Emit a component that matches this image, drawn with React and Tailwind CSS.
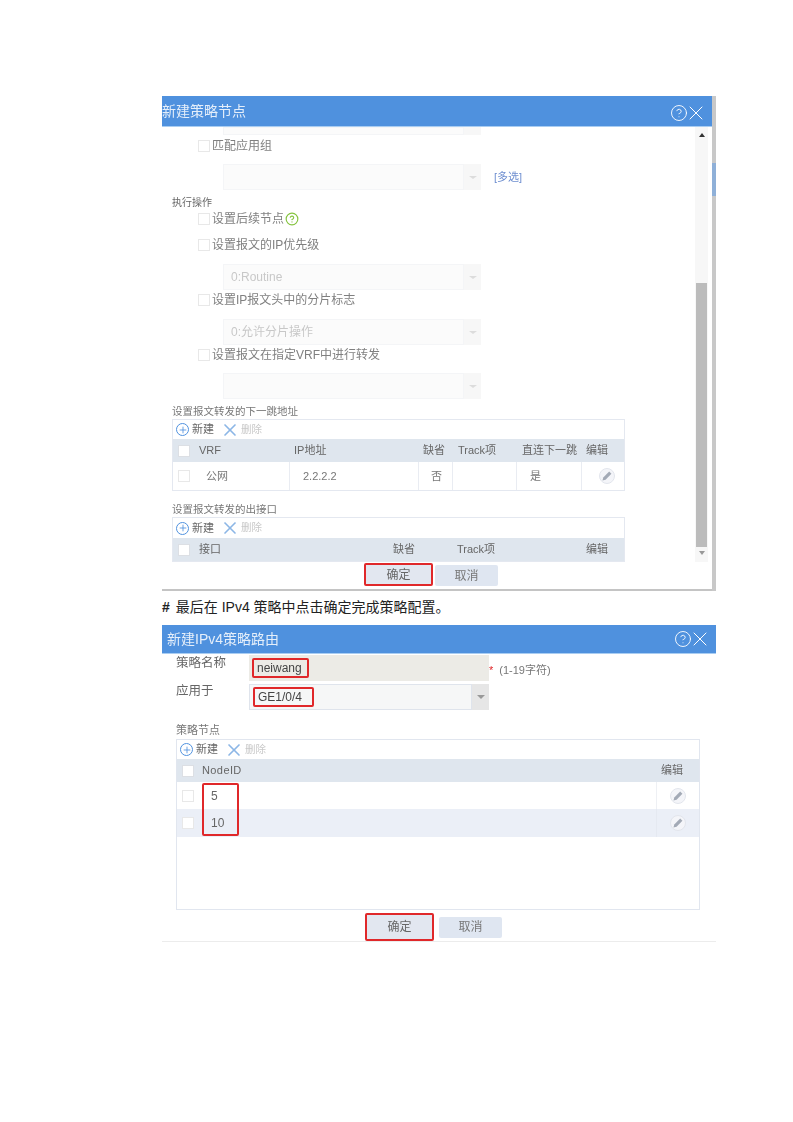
import { CircleHelp, X, Plus } from 'lucide-react'

const Box = ({ dim }) => (
  <span className={`block w-[12px] h-[12px] shrink-0 border ${dim ? 'border-[#e8e8e8] bg-white' : 'border-[#dcdfe4] bg-white'}`} />
)

const CheckRow = ({ children, className = '' }) => (
  <div className={`h-[20px] pl-[36px] flex items-center gap-[2px] text-[12px] text-[#808080] ${className}`}>
    <Box dim />
    <span className="flex items-center">{children}</span>
  </div>
)

const FadedSelect = ({ value, noArrow, className = '' }) => (
  <div className={`ml-[61px] w-[258px] flex ${className}`}>
    <div className="flex-1 bg-[#fbfbfb] border border-[#f4f5f7] pl-[7px] flex items-center text-[12px] text-[#c8c8c8]">{value}</div>
    <div className="w-[17px] bg-[#f7f7f7] flex items-center justify-center">
      {!noArrow && <span className="w-0 h-0 border-x-[4px] border-x-transparent border-t-[3px] border-t-[#dcdcdc]" />}
    </div>
  </div>
)

const Toolbar = ({ h }) => (
  <div className={`flex items-center pl-[3px] text-[11px] text-[#666] ${h}`}>
    <span className="w-[13px] h-[13px] rounded-full border-[1.5px] border-[#4f91de] flex items-center justify-center">
      <Plus size={10} strokeWidth={2} className="text-[#4f91de]" />
    </span>
    <span className="ml-[3px]">新建</span>
    <X size={20} strokeWidth={2} className="ml-[6px] text-[#8cb6e6]" />
    <span className="ml-[1px] text-[10.5px] text-[#c8c8c8]">删除</span>
  </div>
)

const PencilBtn = () => (
  <span className="w-[16px] h-[16px] rounded-full border border-[#e2e5ec] bg-[#f4f5f9] flex items-center justify-center">
    <svg width="12" height="12" viewBox="0 0 10 10">
      <path d="M1.2 8.8 L1.9 6.2 L6.8 1.3 L8.7 3.2 L3.8 8.1 Z" fill="#a3aab6" />
    </svg>
  </span>
)

const Title = ({ children, barClass, iconClass = '' }) => (
  <div className={`bg-[#4f91de] flex items-center justify-between text-white text-[14px] border-b border-[#a9cdf2] ${barClass}`}>
    <span className="opacity-85">{children}</span>
    <span className={`flex items-center ${iconClass}`}>
      <CircleHelp size={18} strokeWidth={1.2} className="-mr-[4px]" />
      <X size={24} strokeWidth={1} />
    </span>
  </div>
)

const Buttons = ({ className, gap, okH, cancelH, align }) => (
  <div className={`flex ${align} ${gap} ${className}`}>
    <div className={`w-[69px] ${okH} border-2 border-[#e0282a] rounded-[2px] bg-[#e2e7f0] flex items-center justify-center text-[12px] text-[#666]`}>确定</div>
    <div className={`w-[63px] ${cancelH} rounded-[2px] bg-[#dfe6f1] flex items-center justify-center text-[12px] text-[#777]`}>取消</div>
  </div>
)

const RedBox = ({ children, w }) => (
  <div className={`ml-[3px] h-[20px] ${w} border-2 border-[#e0282a] rounded-[2px] pl-[3px] flex items-center text-[12px] text-[#444]`}>{children}</div>
)

export default function App() {
  return (
    <div className="min-h-[1122px] bg-white pt-[96px] pl-[162px] font-['Liberation_Sans','Noto_Sans_CJK_SC',sans-serif]">
      {/* first dialog */}
      <div className="w-[554px] h-[495px] flex blur-[0.7px]">
        <div className="w-[550px] flex flex-col">
          <Title barClass="h-[31px] pr-[4px]" iconClass="pt-[3px]">新建策略节点</Title>
          <div className="flex-1 flex border-b-[2px] border-[#c4c4c4]">
            <div className="w-[533px] flex flex-col">
              <FadedSelect noArrow className="h-[8px]" />
              <CheckRow className="mt-[1px]">匹配应用组</CheckRow>
              <div className="flex items-center mt-[8px]">
                <FadedSelect className="h-[26px]" />
                <span className="ml-[13px] text-[11px] text-[#6f8fd0]">[多选]</span>
              </div>
              <div className="mt-[6px] h-[13px] pl-[10px] flex items-center text-[10px] text-[#666]">执行操作</div>
              <CheckRow>
                设置后续节点
                <CircleHelp size={14} strokeWidth={2} className="ml-[1px] text-[#86c440]" />
              </CheckRow>
              <CheckRow className="mt-[6px]">设置报文的IP优先级</CheckRow>
              <FadedSelect value="0:Routine" className="h-[26px] mt-[9px]" />
              <CheckRow>设置IP报文头中的分片标志</CheckRow>
              <FadedSelect value="0:允许分片操作" className="h-[26px] mt-[9px]" />
              <CheckRow>设置报文在指定VRF中进行转发</CheckRow>
              <FadedSelect className="h-[26px] mt-[8px]" />
              <div className="mt-[6px] h-[14px] pl-[10px] flex items-center text-[10.5px] text-[#777]">设置报文转发的下一跳地址</div>

              <div className="ml-[10px] w-[453px] border border-[#e4e8f0]">
                <Toolbar h="h-[19px]" />
                <div className="h-[23px] bg-[#dfe6ee] grid grid-cols-[117px_129px_34px_64px_65px_1fr] items-center text-[11px] text-[#666]">
                  <div className="flex items-center pl-[5px] gap-[9px]"><Box />VRF</div>
                  <div className="pl-[4px]">IP地址</div>
                  <div className="pl-[4px]">缺省</div>
                  <div className="pl-[5px]">Track项</div>
                  <div className="pl-[5px]">直连下一跳</div>
                  <div className="pl-[4px]">编辑</div>
                </div>
                <div className="h-[28px] grid grid-cols-[117px_129px_34px_64px_65px_1fr] items-stretch text-[11px] text-[#777] divide-x divide-[#e9ecf2]">
                  <div className="flex items-center pl-[5px] gap-[16px]"><Box dim />公网</div>
                  <div className="pl-[13px] flex items-center">2.2.2.2</div>
                  <div className="pl-[12px] flex items-center">否</div>
                  <div />
                  <div className="pl-[13px] flex items-center">是</div>
                  <div className="pl-[17px] flex items-center"><PencilBtn /></div>
                </div>
              </div>

              <div className="mt-[11px] h-[15px] pl-[10px] flex items-center text-[10.5px] text-[#777]">设置报文转发的出接口</div>
              <div className="ml-[10px] w-[453px] border border-[#e4e8f0]">
                <Toolbar h="h-[20px]" />
                <div className="h-[23px] bg-[#dfe6ee] grid grid-cols-[216px_64px_129px_1fr] items-center text-[11px] text-[#666]">
                  <div className="flex items-center pl-[5px] gap-[9px]"><Box />接口</div>
                  <div className="pl-[4px]">缺省</div>
                  <div className="pl-[4px]">Track项</div>
                  <div className="pl-[4px]">编辑</div>
                </div>
              </div>
              <Buttons className="mt-[1px] ml-[202px]" gap="gap-[2px]" okH="h-[23px]" cancelH="h-[21px]" align="items-end" />
            </div>

            {/* scrollbar */}
            <div className="w-[13px] h-[435px] bg-[#f7f7f7] flex flex-col items-center">
              <span className="mt-[6px] w-0 h-0 border-x-[3px] border-x-transparent border-b-[4px] border-b-[#333]" />
              <div className="h-[146px]" />
              <div className="w-[11px] h-[264px] bg-[#bcbcbc]" />
              <span className="mt-[4px] w-0 h-0 border-x-[3px] border-x-transparent border-t-[4px] border-t-[#999]" />
            </div>
          </div>
        </div>
        <div className="w-[4px] flex flex-col bg-[#c8c8c8]">
          <div className="h-[67px]" />
          <div className="h-[33px] bg-[#8fb0d8]" />
        </div>
      </div>

      <p className="mt-[6px] h-[20px] flex items-center text-[14px] text-[#222]">
        <span className="font-bold">#</span>
        <span className="ml-[6px]">最后在 IPv4 策略中点击确定完成策略配置。</span>
      </p>

      {/* second dialog */}
      <div className="mt-[8px] w-[554px] blur-[0.7px] border-b border-[#ececec]">
        <Title barClass="h-[29px] pl-[5px] pr-[4px]">新建IPv4策略路由</Title>
        <div className="pl-[14px] pt-[1px]">
          <div className="flex items-start">
            <span className="w-[73px] text-[12.5px] text-[#666] leading-[16px]">策略名称</span>
            <div className="w-[240px] h-[26px] bg-[#ecebe6] flex items-center"><RedBox w="w-[57px]">neiwang</RedBox></div>
            <span className="mt-[9px] text-[11px] leading-[12px] text-[#e0282a]">*</span>
            <span className="mt-[7px] ml-[6px] text-[11px] text-[#777]">(1-19字符)</span>
          </div>
          <div className="flex items-start mt-[3px]">
            <span className="w-[73px] text-[12.5px] text-[#666] leading-[14px]">应用于</span>
            <div className="w-[240px] h-[26px] flex">
              <div className="flex-1 bg-[#f6f7f7] border border-[#dfe4ec] flex items-center"><RedBox w="w-[61px]">GE1/0/4</RedBox></div>
              <div className="w-[17px] bg-[#e6e6e6] flex items-center justify-center">
                <span className="w-0 h-0 border-x-[4px] border-x-transparent border-t-[4px] border-t-[#999]" />
              </div>
            </div>
          </div>
          <div className="mt-[13px] h-[14px] flex items-center text-[11px] text-[#777]">策略节点</div>
          <div className="relative mt-[2px] w-[524px] h-[171px] border border-[#e1e6ef]">
            <Toolbar h="h-[19px]" />
            <div className="h-[23px] bg-[#dfe6ee] flex items-center justify-between text-[11px] text-[#666]">
              <div className="flex items-center pl-[5px] gap-[8px]"><Box /><span className="tracking-[0.4px]">NodeID</span></div>
              <span className="pr-[16px]">编辑</span>
            </div>
            <div className="h-[27px] flex text-[12px] text-[#666]">
              <div className="flex-1 flex items-center pl-[5px] gap-[17px]"><Box dim />5</div>
              <div className="w-[43px] border-l border-[#eef0f4] flex items-center justify-center"><PencilBtn /></div>
            </div>
            <div className="h-[28px] flex text-[12px] text-[#666] bg-[#ebeff7]">
              <div className="flex-1 flex items-center pl-[5px] gap-[17px]"><Box dim />10</div>
              <div className="w-[43px] border-l border-[#e5e9f1] flex items-center justify-center"><PencilBtn /></div>
            </div>
            {/* annotation over the NodeID values */}
            <div className="absolute left-[25px] top-[43px] w-[37px] h-[53px] border-2 border-[#e0282a] rounded-[2px]" />
          </div>
          <Buttons className="mt-[3px] ml-[189px]" gap="gap-[5px]" okH="h-[28px]" cancelH="h-[21px]" align="items-center" />
        </div>
      </div>
    </div>
  )
}
